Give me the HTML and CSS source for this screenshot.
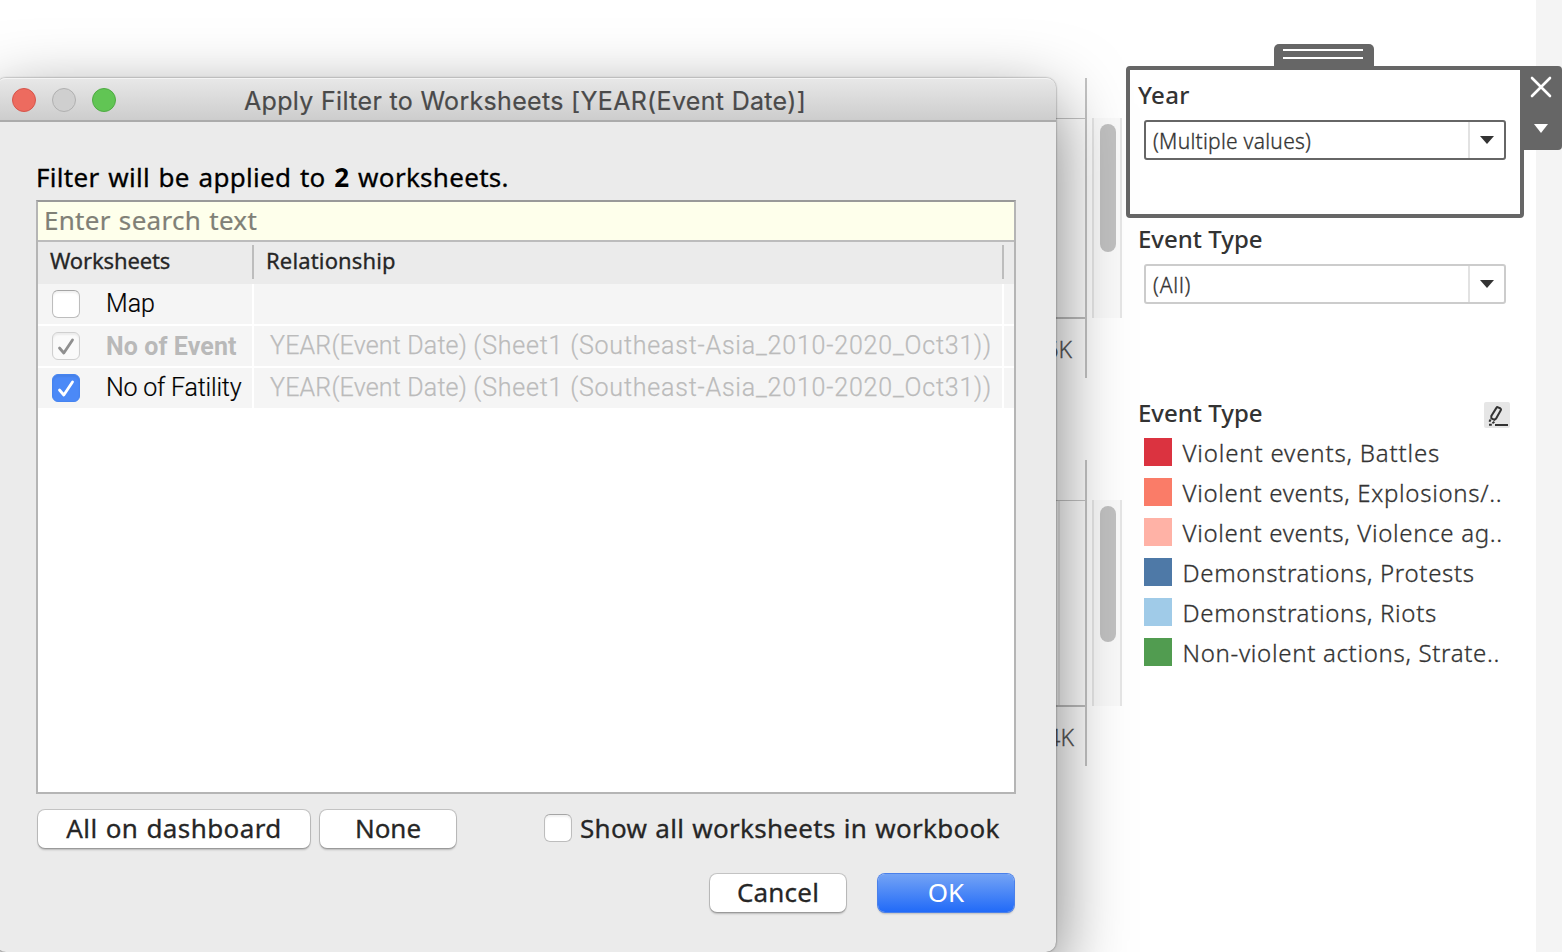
FILE: index.html
```html
<!DOCTYPE html>
<html lang="en">
<head>
<meta charset="utf-8">
<title>Apply Filter to Worksheets</title>
<link rel="stylesheet" href="styles.css">
</head>
<body>
<main class="dashboard">
  <section class="charts">
    <div class="panel panel-events">
      <div class="plot"><div class="plot-head"></div><div class="plot-body"></div><div class="axis"><span>6K</span></div></div>
      <div class="scroll"><div class="thumb"></div></div>
    </div>
    <div class="panel panel-fatalities">
      <div class="plot"><div class="plot-head"></div><div class="plot-body"></div><div class="axis"><span>4K</span></div></div>
      <div class="scroll"><div class="thumb"></div></div>
    </div>
  </section>
  <aside class="filters">
    <div class="card selected">
      <div class="grip"></div>
      <h2 class="t-year">Year</h2>
      <div class="select active"><span class="t-multi">(Multiple values)</span><i><svg width="14" height="8" viewBox="0 0 14 8"><path d="M0 0h14L7 8z"/></svg></i></div>
      <div class="tools">
        <svg width="22" height="22" viewBox="0 0 22 22"><path d="M2 2l18 18M20 2L2 20" fill="none" stroke="#fff" stroke-width="2.6" stroke-linecap="round"/></svg>
        <svg width="14" height="9" viewBox="0 0 14 9"><path d="M0 0h14L7 9z" fill="#fff"/></svg>
      </div>
    </div>
    <div class="card">
      <h2 class="t-type">Event Type</h2>
      <div class="select"><span class="t-all">(All)</span><i><svg width="14" height="8" viewBox="0 0 14 8"><path d="M0 0h14L7 8z"/></svg></i></div>
    </div>
    <div class="legend">
      <div class="legend-head"><h2 class="t-type">Event Type</h2>
        <span class="edit"><svg width="26" height="26" viewBox="0 0 26 26" fill="none" stroke="#333" stroke-width="2"><path d="M12.4 5.9q.6-1.1 1.7-.6l2.4 1.2q.9.5.4 1.5l-4.8 8.6-1.7 1.3-3-1.6-.1-2.3z"/><path d="M6.6 17.6l-1.2 2.2M8.4 21.2l2-1.4M5 22.8h2.8M11 23H24"/></svg></span>
      </div>
      <ul>
        <li><b class="red"></b><span class="l1">Violent events, Battles</span></li>
        <li><b class="coral"></b><span class="l2">Violent events, Explosions/..</span></li>
        <li><b class="pink"></b><span class="l3">Violent events, Violence ag..</span></li>
        <li><b class="blue"></b><span class="l4">Demonstrations, Protests</span></li>
        <li><b class="sky"></b><span class="l5">Demonstrations, Riots</span></li>
        <li><b class="green"></b><span class="l6">Non-violent actions, Strate..</span></li>
      </ul>
    </div>
  </aside>
  <div class="gutter"></div>
</main>

<div class="dialog">
  <header class="titlebar">
    <div class="lights"><i class="close"></i><i class="min"></i><i class="max"></i></div>
    <h1>Apply Filter to Worksheets [YEAR(Event Date)]</h1>
  </header>
  <div class="content">
    <p class="summary">Filter will be applied to <strong>2</strong> worksheets.</p>
    <div class="list">
      <div class="search"><span>Enter search text</span></div>
      <div class="row head"><div><span class="h1t">Worksheets</span></div><div><span class="h2t">Relationship</span></div><div></div></div>
      <div class="row"><div><span class="check"></span><span class="n1">Map</span></div><div></div><div></div></div>
      <div class="row dim"><div><span class="check off"><svg width="28" height="28" viewBox="0 0 28 28"><path d="M7.5 16l4.3 5L20.5 8" fill="none" stroke="#8f8f8f" stroke-width="2.8" stroke-linecap="round" stroke-linejoin="round"/></svg></span><span class="n2">No of Event</span></div><div><span class="rel">YEAR(Event Date) <span class="source">(Sheet1 (Southeast-Asia_2010-2020_Oct31))</span></span></div><div></div></div>
      <div class="row"><div><span class="check on"><svg width="28" height="28" viewBox="0 0 28 28"><path d="M7.5 16l4.3 5L20.5 8" fill="none" stroke="#fff" stroke-width="2.8" stroke-linecap="round" stroke-linejoin="round"/></svg></span><span class="n3">No of Fatility</span></div><div><span class="rel">YEAR(Event Date) <span class="source">(Sheet1 (Southeast-Asia_2010-2020_Oct31))</span></span></div><div></div></div>
    </div>
    <div class="actions">
      <button class="b-all"><span>All on dashboard</span></button>
      <button class="b-none"><span>None</span></button>
      <label><span class="check small"></span><span class="t-show">Show all worksheets in workbook</span></label>
    </div>
    <div class="confirm">
      <button class="b-cancel"><span>Cancel</span></button>
      <button class="b-ok"><span>OK</span></button>
    </div>
  </div>
</div>
</body>
</html>
```
FILE: styles.css
```css
* { box-sizing: border-box; }
body { margin: 0; width: 1562px; height: 952px; overflow: hidden; position: relative; background: #fff; font-family: "Noto Sans", sans-serif; color: #000; }
h1, h2, p, ul { margin: 0; padding: 0; }
span { white-space: nowrap; }

.dashboard { display: grid; grid-template-columns: 1126px 410px 26px; height: 952px; }
.gutter { background: #f4f4f4; }

.charts { padding-top: 78px; display: flex; flex-direction: column; gap: 82px; }
.panel { display: flex; gap: 5px; height: 300px; }
.panel-fatalities { height: 306px; }
.plot { width: 1087px; border-right: 2px solid #c4c4c4; }
.plot-head { height: 41px; border-bottom: 1px solid #c4c4c4; }
.plot-body { height: 200px; border-bottom: 2px solid #bdbdbd; }
.panel-fatalities .plot-body { height: 206px; background: linear-gradient(#e8e8e8, #e8e8e8) 1058px 0 / 2px 100% no-repeat; }
.axis { padding: 13px 13px 0 0; text-align: right; font-size: 23px; font-weight: 300; line-height: 34px; color: #555; -webkit-text-stroke: .3px; }
.panel-fatalities .axis { padding-right: 11px; }
.scroll { margin-top: 40px; width: 30px; height: 200px; border: solid #e6e6e6; border-width: 0 2px; background: #fafafa; padding: 6px; }
.panel-fatalities .scroll { height: 206px; }
.thumb { width: 16px; height: 128px; border-radius: 8px; background: #c1c1c1; }
.panel-fatalities .thumb { height: 136px; }

.filters { padding-top: 66px; }
.filters h2 { font-size: 24px; font-weight: 500; line-height: 34px; color: #333; }
.card { height: 144px; padding: 6px 12px; }
.card.selected { position: relative; width: 398px; height: 152px; margin-bottom: -2px; border: 4px solid #666; border-radius: 4px; padding: 8px; }
.t-year { letter-spacing: .3px; }
.grip { position: absolute; left: 144px; top: -26px; width: 100px; height: 22px; border-radius: 5px 5px 0 0; background: linear-gradient(#fff, #fff) 9px 5px / 80px 2px no-repeat, linear-gradient(#fff, #fff) 9px 13px / 80px 2px no-repeat, #666; }
.tools { position: absolute; left: 390px; top: -4px; width: 42px; height: 84px; border-radius: 0 4px 4px 0; background: #666; display: flex; flex-direction: column; align-items: center; padding-top: 10px; gap: 26px; }
.tools svg { display: block; }
.select { display: flex; width: 362px; height: 40px; margin: 8px 0 0 6px; border: 2px solid #ccc; border-radius: 3px; background: #fff; font-size: 21px; font-weight: 300; -webkit-text-stroke: .3px; line-height: 38px; color: #333; padding-left: 7px; justify-content: space-between; }
.t-multi { letter-spacing: .25px; }
.t-all { letter-spacing: .8px; }
.select.active { border-color: #666; }
.select i { width: 36px; border-left: 2px solid #e2e2e2; display: flex; align-items: center; justify-content: center; fill: #333; }
.legend { padding: 36px 12px 0; }
.legend-head { display: flex; justify-content: space-between; align-items: center; height: 34px; }
.edit { width: 26px; height: 26px; background: #e6e6e6; border-radius: 2px; margin: 3px 14px 0 0; }
.edit svg { display: block; }
.legend ul { list-style: none; padding: 8px 6px 0; display: grid; gap: 12px; }
.legend li { display: flex; gap: 10.5px; height: 28px; line-height: 30px; font-size: 24px; font-weight: 300; -webkit-text-stroke: .3px; letter-spacing: .68px; color: #333; }
.legend .l1 { letter-spacing: .84px; }
.legend b { width: 28px; height: 28px; flex: none; }
.red { background: #db3340; } .coral { background: #fa7c68; } .pink { background: #ffb2a6; }
.blue { background: #4e79a7; } .sky { background: #a0cbe8; } .green { background: #519c50; }

.dialog { position: absolute; left: -4px; top: 78px; width: 1060px; height: 874px; border-radius: 10px; overflow: visible; background: #ebebeb; box-shadow: 0 0 2px rgba(0,0,0,.55), 0 24px 70px rgba(0,0,0,.52); }
.titlebar { position: relative; height: 44px; border-radius: 10px 10px 0 0; border-bottom: 2px solid #ababab; background: linear-gradient(#e8e8e8, #cdcdcd); box-shadow: inset 0 2px 0 -1px #f4f4f4; display: flex; align-items: center; padding: 2px 0 0 16px; }
.lights { display: flex; gap: 16px; width: 232px; }
.lights i { width: 24px; height: 24px; border-radius: 50%; border: 1px solid #b0b0b0; background: #cfcfcf; }
.lights .close { background: #ed6b5f; border-color: #d6554b; }
.lights .max { background: #61c554; border-color: #4fab43; }
.titlebar h1 { font: 400 25px/38px Inter, sans-serif; letter-spacing: .32px; -webkit-text-stroke: .2px; color: #4a4a4a; white-space: nowrap; padding-top: 2px; }
.content { padding: 35px 40px 0 40px; }
.summary { font-size: 26px; font-weight: 400; -webkit-text-stroke: .3px; line-height: 40px; height: 43px; letter-spacing: .3px; word-spacing: 1.6px; white-space: nowrap; }
.summary strong { -webkit-text-stroke: 0; }
.list { height: 594px; border: 2px solid #b5b5b5; border-top-color: #999; background: #fff; }
.search { height: 40px; border-bottom: 2px solid #bcbcbc; background: #feffeb; padding-left: 6px; font-size: 26px; -webkit-text-stroke: .2px; line-height: 36px; color: #808076; letter-spacing: .3px; word-spacing: 1px; }
.row { display: grid; grid-template-columns: 214px 748px 1fr; gap: 2px; height: 40px; margin-bottom: 2px; font-family: Roboto, sans-serif; font-weight: 300; font-size: 25px; line-height: 40px; }
.row > div { background: #f5f5f5; display: flex; align-items: center; }
.row > div:first-child { padding-left: 14px; gap: 26px; }
.row > div:nth-child(2) { padding-left: 16px; color: #bbb; }
.rel { letter-spacing: .18px; -webkit-text-stroke: .25px; }
.source { letter-spacing: .8px; }
.n1, .n3 { -webkit-text-stroke: .2px; }
.n3 { letter-spacing: -.2px; }
.row.dim { color: #b9b9b9; }
.row.dim .n2 { font-weight: 700; padding-top: 2px; line-height: 38px; letter-spacing: .1px; }
.row.head { height: 42px; margin: 0; gap: 0; background: #ebebeb; grid-template-columns: 216px 750px 1fr; font-family: "Noto Sans", sans-serif; font-size: 22px; font-weight: 400; -webkit-text-stroke: .3px; line-height: 32px; padding: 3px 0 5px; }
.row.head > div { background: none; height: 34px; }
.row.head > div:first-child, .row.head > div:nth-child(2) { border-right: 2px solid #bdbdbd; color: #262626; padding-left: 12px; }
.row.head span { margin-top: -5px; }
.h1t { letter-spacing: -.15px; }
.h2t { letter-spacing: .15px; }
.check { width: 28px; height: 28px; flex: none; border-radius: 6px; border: 1px solid #bdbdbd; border-top-color: #a5a5a5; background: #fff; box-shadow: inset 0 2px 2px rgba(0,0,0,.06); }
.check svg { display: block; margin: -1px; }
.check.off { border-color: #cfcfcf; background: #fafafa; }
.check.on { border-color: #4684f0; background: #4b89f7; }

button { height: 38px; padding: 0; border: 0; border-radius: 7px; background: #fff; box-shadow: 0 0 0 1px rgba(0,0,0,.17), 0 2px 2px rgba(0,0,0,.22); font: 400 26px/36px "Noto Sans", sans-serif; -webkit-text-stroke: .3px; color: #262626; display: flex; justify-content: center; align-items: flex-start; }
.actions { display: flex; align-items: center; padding: 16px 0 0 2px; height: 54px; }
.b-all { width: 272px; margin-right: 10px; letter-spacing: .4px; word-spacing: 1px; }
.b-none { width: 136px; margin-right: 88px; }
.actions label { display: flex; align-items: center; gap: 8px; font-size: 26px; font-weight: 400; -webkit-text-stroke: .3px; line-height: 36px; color: #262626; }
.t-show { letter-spacing: .3px; word-spacing: 1px; margin-top: -2px; }
.check.small { margin-top: -3px; }
.confirm { display: flex; justify-content: flex-end; gap: 32px; padding: 26px 2px 0 0; }
.b-cancel { width: 136px; letter-spacing: .2px; }
.b-ok { width: 136px; color: #fff; -webkit-text-stroke: 0; background: linear-gradient(#74a3f5, #216af8); box-shadow: 0 0 0 1px #4a80ea, 0 2px 2px rgba(0,0,0,.2); }
```
